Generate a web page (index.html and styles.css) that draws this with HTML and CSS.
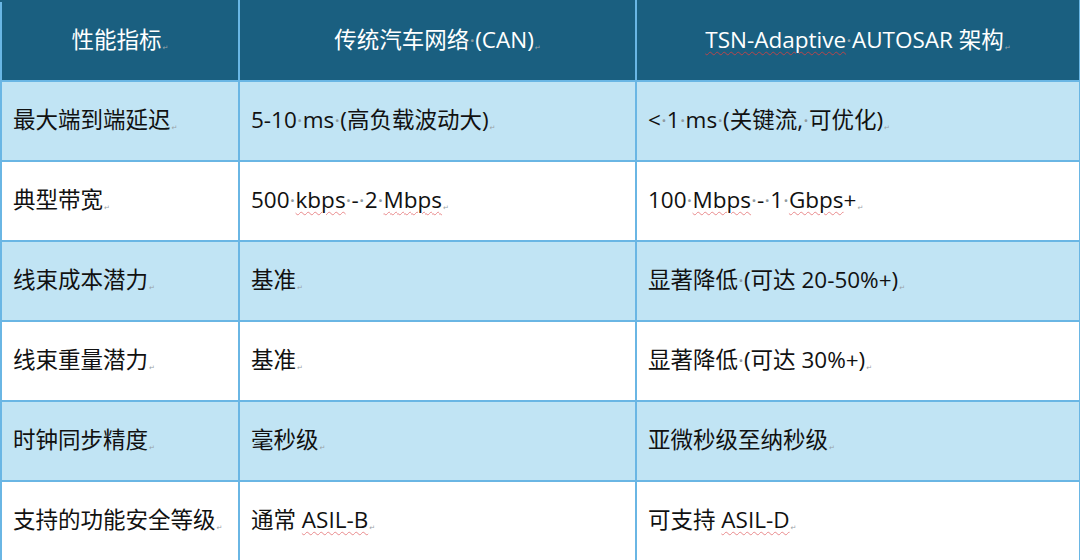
FILE: index.html
```html
<!DOCTYPE html>
<html lang="zh">
<head>
<meta charset="utf-8">
<link rel="stylesheet" href="styles.css">
</head>
<body>
<table class="cmp">
  <colgroup><col class="c1"><col class="c2"><col class="c3"></colgroup>
  <thead>
    <tr>
      <th>性能指标<i class="pm">↵</i></th>
      <th>传统汽车网络<i class="sp">·</i>(CAN)<i class="pm">↵</i></th>
      <th><span class="wv">TSN-Adaptive</span><i class="sp">·</i>AUTOSAR 架构<i class="pm">↵</i></th>
    </tr>
  </thead>
  <tbody>
    <tr class="alt">
      <td>最大端到端延迟<i class="pm">↵</i></td>
      <td>5-10<i class="sp">·</i>ms<i class="sp">·</i>(高负载波动大)<i class="pm">↵</i></td>
      <td>&lt;<i class="sp">·</i>1<i class="sp">·</i>ms<i class="sp">·</i>(关键流,<i class="sp">·</i>可优化)<i class="pm">↵</i></td>
    </tr>
    <tr>
      <td>典型带宽<i class="pm">↵</i></td>
      <td>500<i class="sp">·</i><span class="wv">kbps</span><i class="sp">·</i>-<i class="sp">·</i>2<i class="sp">·</i><span class="wv">Mbps</span><i class="pm">↵</i></td>
      <td>100<i class="sp">·</i><span class="wv">Mbps</span><i class="sp">·</i>-<i class="sp">·</i>1<i class="sp">·</i><span class="wv">Gbps</span>+<i class="pm">↵</i></td>
    </tr>
    <tr class="alt">
      <td>线束成本潜力<i class="pm">↵</i></td>
      <td>基准<i class="pm">↵</i></td>
      <td>显著降低<i class="sp">·</i>(可达 20-50%+)<i class="pm">↵</i></td>
    </tr>
    <tr>
      <td>线束重量潜力<i class="pm">↵</i></td>
      <td>基准<i class="pm">↵</i></td>
      <td>显著降低<i class="sp">·</i>(可达 30%+)<i class="pm">↵</i></td>
    </tr>
    <tr class="alt">
      <td>时钟同步精度<i class="pm">↵</i></td>
      <td>毫秒级<i class="pm">↵</i></td>
      <td>亚微秒级至纳秒级<i class="pm">↵</i></td>
    </tr>
    <tr>
      <td>支持的功能安全等级<i class="pm">↵</i></td>
      <td>通常 <span class="wv">ASIL-B</span><i class="pm">↵</i></td>
      <td>可支持 <span class="wv">ASIL-D</span><i class="pm">↵</i></td>
    </tr>
  </tbody>
</table>
</body>
</html>
```
FILE: styles.css
```css
html, body {
  margin: 0;
  padding: 0;
  background: #ffffff;
}

.cmp {
  border-collapse: collapse;
  table-layout: fixed;
  width: 1079px;
  font-family: "Open Sans", "Noto Sans CJK SC", sans-serif;
  font-size: 22.5px;
  color: #111111;
}

.c1 { width: 238px; }
.c2 { width: 397px; }
.c3 { width: 444px; }

.cmp th,
.cmp td {
  border: 2px solid #6ab6e4;
  height: 75px;
  padding: 0 11px 3px;
  vertical-align: middle;
  white-space: nowrap;
  line-height: 1.2;
}

.cmp th {
  background: #1a5f80;
  color: #ffffff;
  font-weight: 400;
  text-align: center;
  border-top-color: #1a5f80;
}

.cmp td {
  text-align: left;
  background: #ffffff;
}

.cmp tr.alt td {
  background: #c1e4f4;
}

.sp {
  font-style: normal;
  color: #8f9aa0;
}

.pm {
  font-style: normal;
  font-family: "DejaVu Sans", sans-serif;
  font-size: 7px;
  color: #9aa3a8;
  vertical-align: -2px;
  margin-left: 1px;
}

.wv {
  text-decoration: underline wavy #e98a8c;
  text-decoration-thickness: 1px;
  text-underline-offset: 3px;
}

th .wv {
  text-decoration-color: #b8454a;
}
```
